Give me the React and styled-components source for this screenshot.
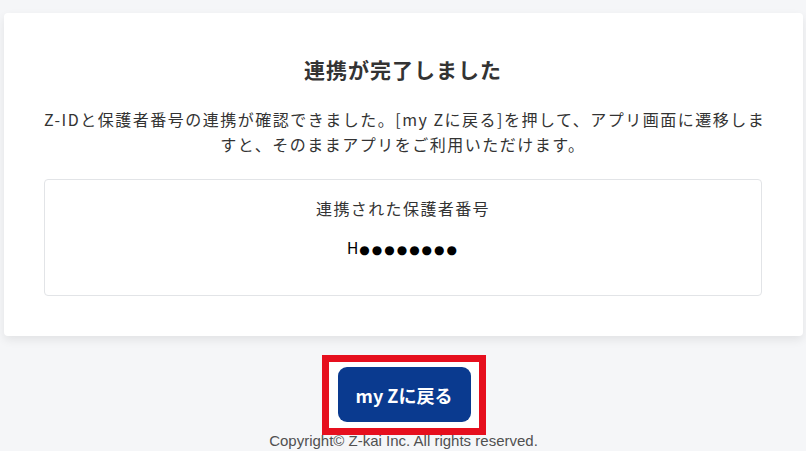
import React from "react";
import styled, { createGlobalStyle } from "styled-components";

const GlobalStyle = createGlobalStyle`
  html, body { margin: 0; padding: 0; background: #f5f6f8; }
  body { font-family: "Noto Sans CJK JP", "Noto Sans", sans-serif; color: #333; }
`;

const Page = styled.div`
  display: flex;
  flex-direction: column;
  align-items: center;
  padding: 13px 3px 0 4px;
`;

const Card = styled.section`
  align-self: stretch;
  background: #fff;
  border-radius: 4px;
  box-shadow: 0 4px 10px rgba(0, 0, 0, 0.08);
  padding: 40px 41px 40px 40px;
  text-align: center;
`;

const Title = styled.h1`
  margin: 0 0 22px;
  font-size: 21px;
  line-height: 32px;
  font-weight: 700;
  letter-spacing: 1px;
  color: #333;
`;

const Lead = styled.p`
  margin: 0 0 22px;
  font-size: 16px;
  line-height: 25px;
  letter-spacing: 1.5px;
  color: #333;
`;

const LeadLine = styled.span`
  display: block;
  white-space: nowrap;
`;

const InfoBox = styled.div`
  border: 1px solid #e2e4e7;
  border-radius: 4px;
  padding: 16px 16px 33px;
  display: flex;
  flex-direction: column;
  gap: 17px;
`;

const Label = styled.div`
  font-size: 16px;
  line-height: 24px;
  letter-spacing: 1.4px;
  color: #333;
`;

const Value = styled.div`
  font-family: "DejaVu Sans", sans-serif;
  font-size: 15px;
  line-height: 24px;
  color: #000;
`;

const Dots = styled.span`
  font-size: 12px;
  letter-spacing: 2px;
  margin-left: 1px;
`;

const Highlight = styled.div`
  margin-top: 19px;
  border: 7px solid #e60f1e;
  background: #fff;
  padding: 5px 8px 6px 9px;
  display: flex;
`;

const BackButton = styled.button`
  width: 133px;
  height: 55px;
  border: none;
  border-radius: 9px;
  background: #0a3a8f;
  color: #fff;
  font-family: "Noto Sans CJK JP", sans-serif;
  font-size: 18px;
  font-weight: 700;
  cursor: pointer;
`;

const Copyright = styled.footer`
  margin-top: -3px;
  font-family: "Liberation Sans", Arial, sans-serif;
  font-size: 15px;
  line-height: 17px;
  color: #505050;
`;

export default function App() {
  return (
    <>
      <GlobalStyle />
      <Page>
        <Card>
          <Title>連携が完了しました</Title>
          <Lead>
            <LeadLine>
              Z-IDと保護者番号の連携が確認できました。[my Zに戻る]を押して、アプリ画面に遷移しま
            </LeadLine>
            <LeadLine>すと、そのままアプリをご利用いただけます。</LeadLine>
          </Lead>
          <InfoBox>
            <Label>連携された保護者番号</Label>
            <Value>
              H<Dots>●●●●●●●●</Dots>
            </Value>
          </InfoBox>
        </Card>
        <Highlight>
          <BackButton>my Zに戻る</BackButton>
        </Highlight>
        <Copyright>Copyright© Z-kai Inc. All rights reserved.</Copyright>
      </Page>
    </>
  );
}
